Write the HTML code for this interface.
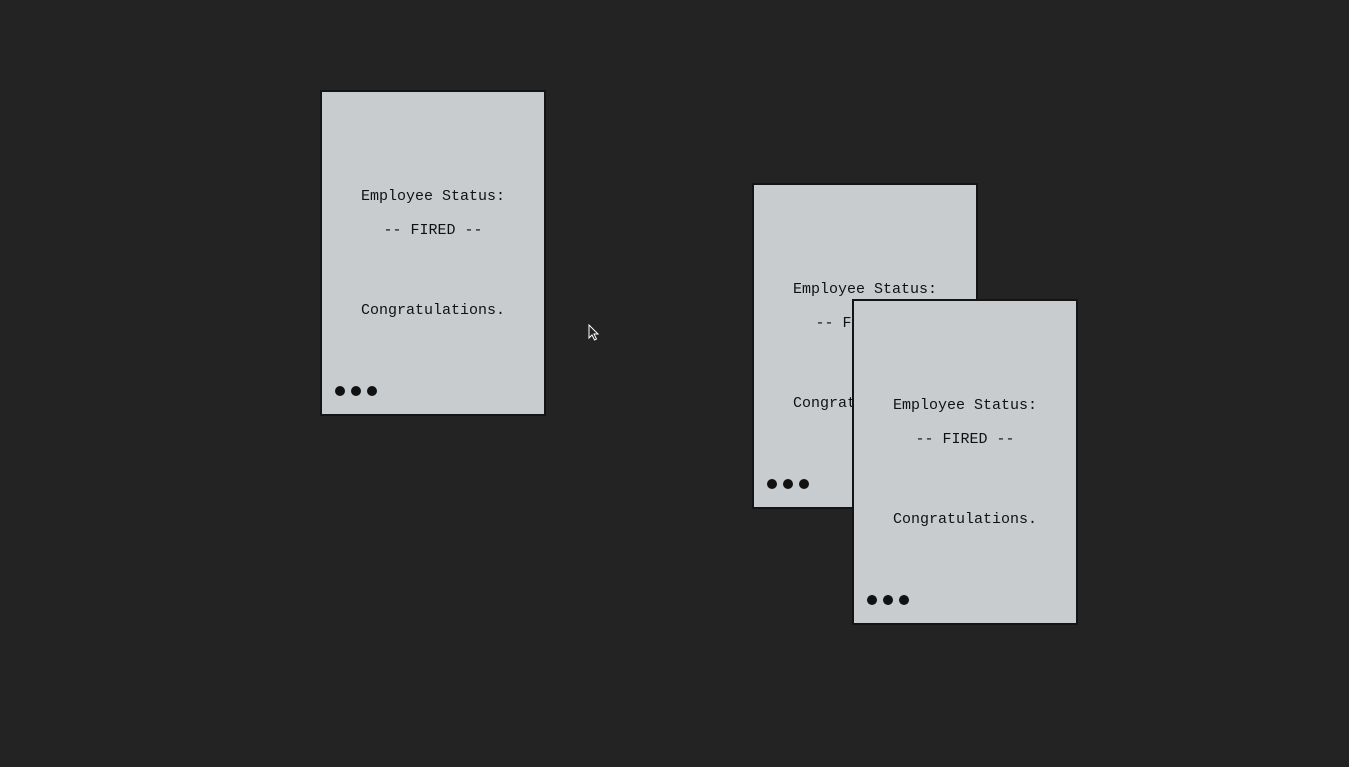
<!DOCTYPE html>
<html><head><style>
body{margin:0;width:1349px;height:767px;background:#232323;position:relative;overflow:hidden}
.c{position:absolute;width:222px;height:322px;background:#c9ccce;border:2px solid #141414;font-family:"Liberation Mono",monospace;font-size:15px;color:#111}
.t{position:absolute;left:0;right:0;text-align:center;line-height:18px}
.d{position:absolute;width:10px;height:10px;border-radius:50%;background:#111;top:294px}
</style></head><body>
<div class="c" style="left:320px;top:90px">
<div class="t" style="top:96px">Employee Status:</div>
<div class="t" style="top:130px">-- FIRED --</div>
<div class="t" style="top:210px">Congratulations.</div>
<div class="d" style="left:13px"></div><div class="d" style="left:29px"></div><div class="d" style="left:45px"></div>
</div>
<div class="c" style="left:752px;top:183px">
<div class="t" style="top:96px">Employee Status:</div>
<div class="t" style="top:130px">-- FIRED --</div>
<div class="t" style="top:210px">Congratulations.</div>
<div class="d" style="left:13px"></div><div class="d" style="left:29px"></div><div class="d" style="left:45px"></div>
</div>
<div class="c" style="left:852px;top:299px">
<div class="t" style="top:96px">Employee Status:</div>
<div class="t" style="top:130px">-- FIRED --</div>
<div class="t" style="top:210px">Congratulations.</div>
<div class="d" style="left:13px"></div><div class="d" style="left:29px"></div><div class="d" style="left:45px"></div>
</div>
<svg style="position:absolute;left:588px;top:324px" width="12" height="18" viewBox="0 0 12 18"><path d="M1 1 L1 14 L4 11 L6.5 16 L8.5 15 L6 10 L10 10 Z" fill="#232323" stroke="#fff" stroke-width="1"/></svg>
</body></html>
